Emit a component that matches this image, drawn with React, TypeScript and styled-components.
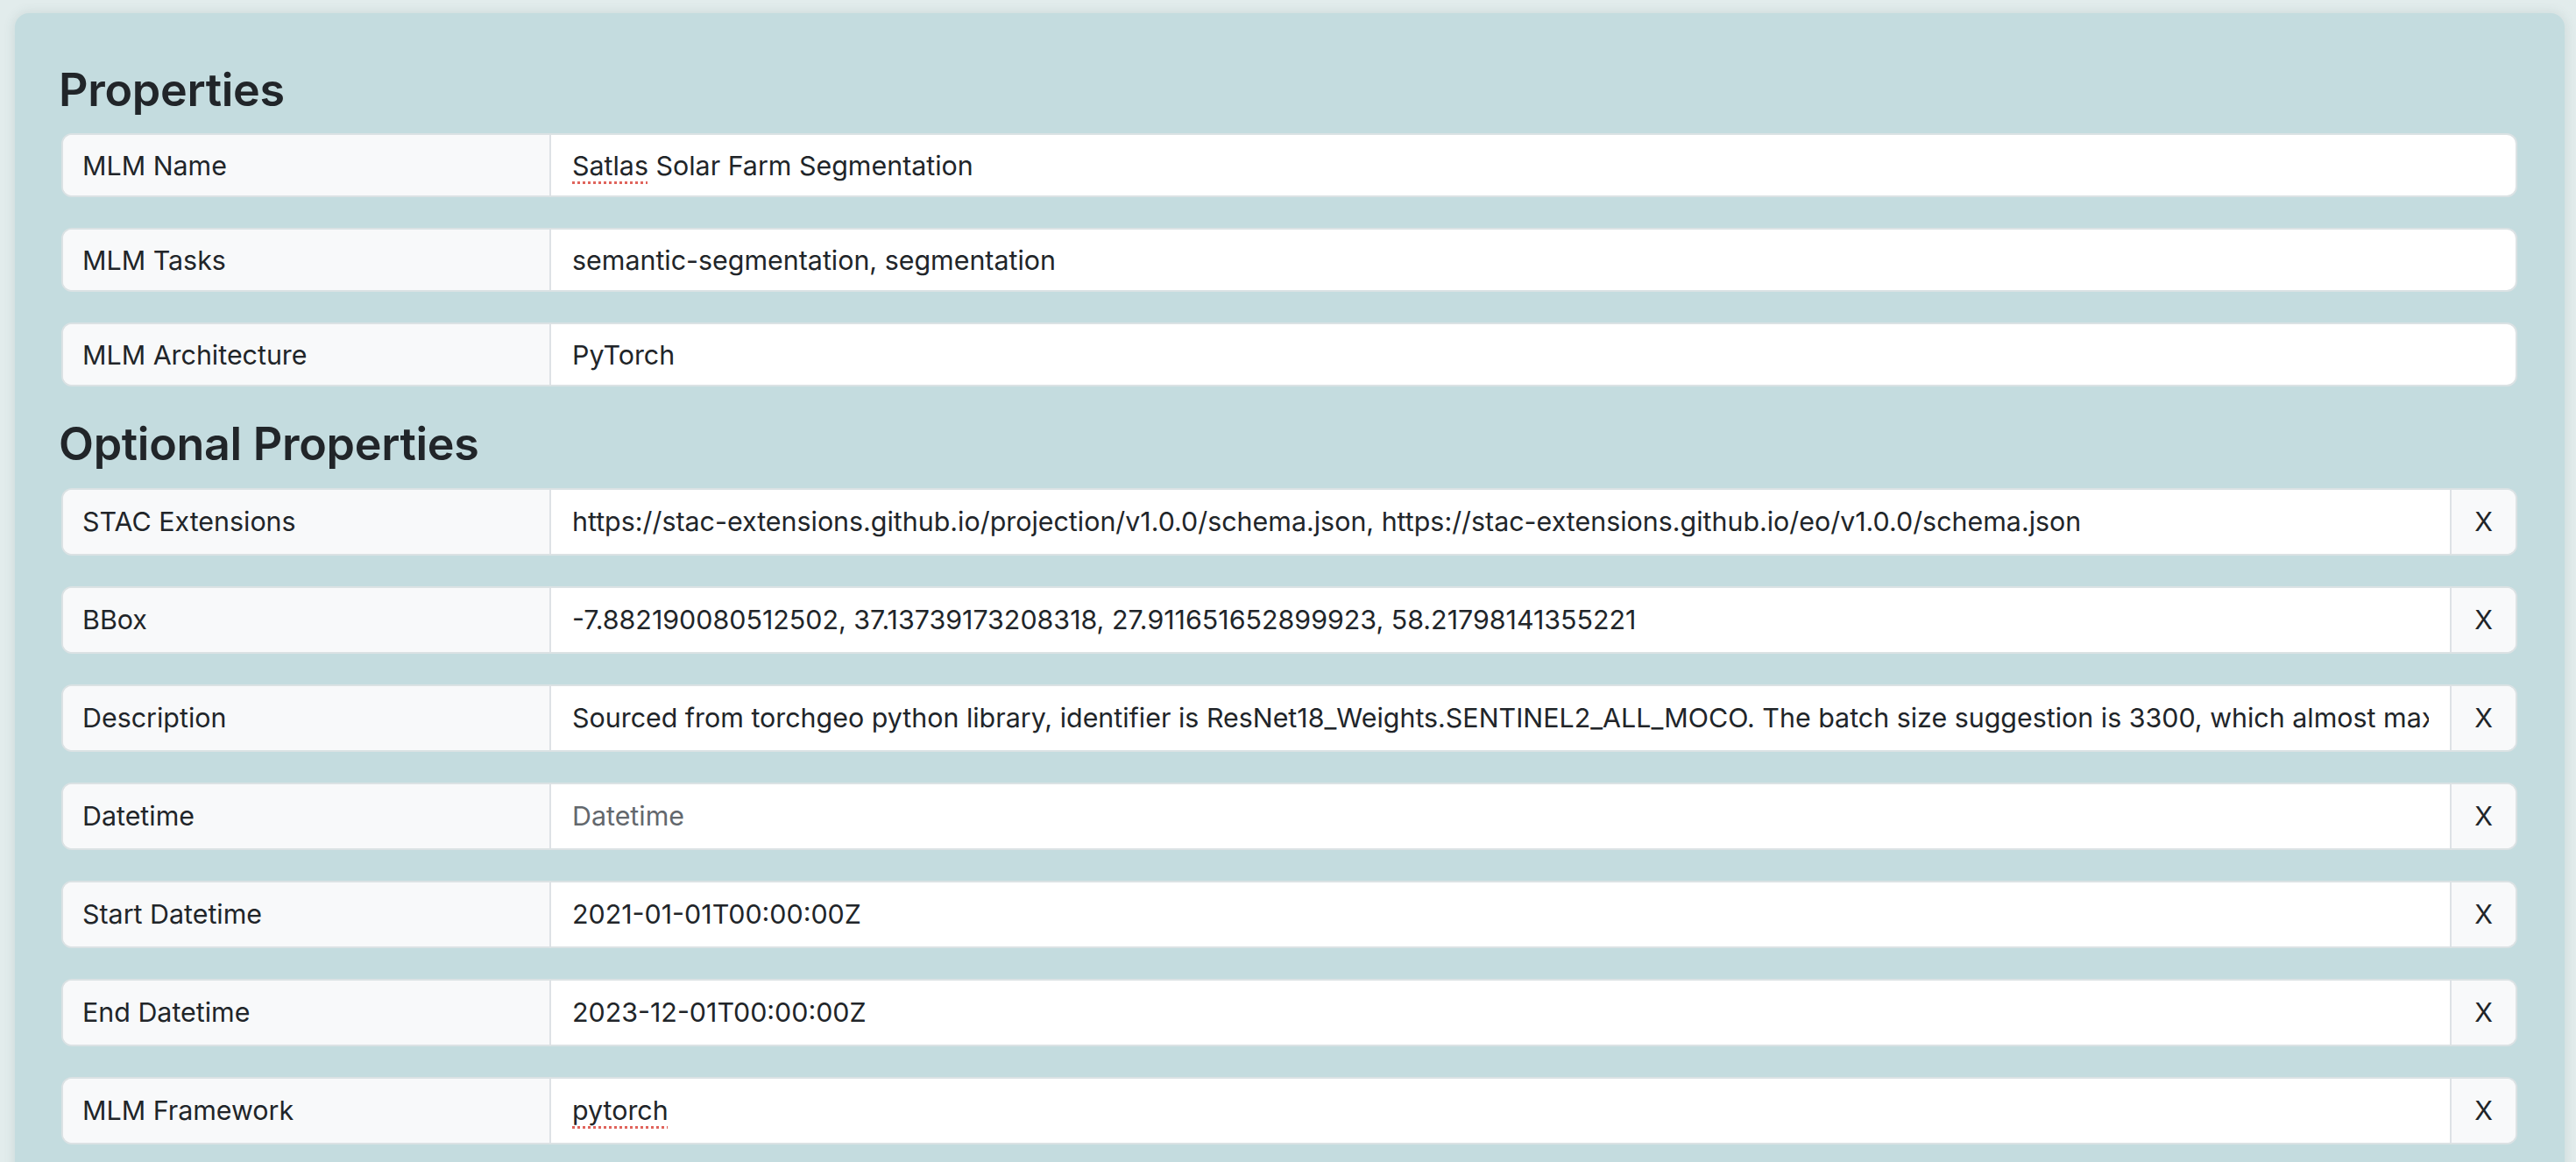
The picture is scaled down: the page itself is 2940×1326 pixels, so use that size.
import styled, { createGlobalStyle } from "styled-components";
import type { FC, ReactNode } from "react";

const GlobalStyle = createGlobalStyle`
  html, body {
    margin: 0;
    padding: 0;
    background: #e2ecec;
    font-family: Inter, "Noto Sans", "Liberation Sans", sans-serif;
    color: #212529;
  }
`;

type Field = {
  label: string;
  value?: ReactNode;
  placeholder?: string;
};

const Typo = ({ children }: { children: ReactNode }) => (
  <S.Misspelled>{children}</S.Misspelled>
);

const required: Field[] = [
  {
    label: "MLM Name",
    value: (
      <>
        <Typo>Satlas</Typo> Solar Farm Segmentation
      </>
    ),
  },
  { label: "MLM Tasks", value: "semantic-segmentation, segmentation" },
  { label: "MLM Architecture", value: "PyTorch" },
];

const optional: Field[] = [
  {
    label: "STAC Extensions",
    value:
      "https://stac-extensions.github.io/projection/v1.0.0/schema.json, https://stac-extensions.github.io/eo/v1.0.0/schema.json",
  },
  {
    label: "BBox",
    value:
      "-7.882190080512502, 37.13739173208318, 27.911651652899923, 58.21798141355221",
  },
  {
    label: "Description",
    value:
      "Sourced from torchgeo python library, identifier is ResNet18_Weights.SENTINEL2_ALL_MOCO. The batch size suggestion is 3300, which almost maxes out the memory of a single GPU.",
  },
  { label: "Datetime", placeholder: "Datetime" },
  { label: "Start Datetime", value: "2021-01-01T00:00:00Z" },
  { label: "End Datetime", value: "2023-12-01T00:00:00Z" },
  { label: "MLM Framework", value: <Typo>pytorch</Typo> },
];

const PropertyRow: FC<Field & { removable?: boolean }> = ({
  label,
  value,
  placeholder,
  removable,
}) => (
  <S.Row $tall={removable}>
    <S.Label>{label}</S.Label>
    <S.Value>
      <S.ValueText $placeholder={!value}>{value ?? placeholder}</S.ValueText>
    </S.Value>
    {removable && <S.Remove type="button">X</S.Remove>}
  </S.Row>
);

export default function App() {
  return (
    <>
      <GlobalStyle />
      <S.Panel>
        <S.Title>Properties</S.Title>
        {required.map((f) => (
          <PropertyRow key={f.label} {...f} />
        ))}
        <S.Title>Optional Properties</S.Title>
        {optional.map((f) => (
          <PropertyRow key={f.label} {...f} removable />
        ))}
      </S.Panel>
    </>
  );
}

const S = {
  Panel: styled.section`
    margin: 15px 13px 0 17px;
    padding: 57px 54px 20px 53px;
    background: #c4dcdf;
    border-radius: 16px;
    box-shadow: 0 0 14px rgba(60, 90, 90, 0.14);
  `,

  Title: styled.h3`
    margin: 0 0 18px -3px;
    font-size: 52px;
    font-weight: 600;
    line-height: 1.2;
    letter-spacing: -0.3px;
    color: #212529;
  `,

  Row: styled.div<{ $tall?: boolean }>`
    display: flex;
    height: ${(p) => (p.$tall ? 77 : 73)}px;
    box-sizing: border-box;
    margin-bottom: 35px;
    border: 2px solid #dbe2e4;
    border-radius: 12px;
    overflow: hidden;
    background: #fff;
    font-size: 30.4px;
  `,

  Label: styled.div`
    flex: 0 0 557px;
    box-sizing: border-box;
    display: flex;
    align-items: center;
    padding: 0 22px;
    background: #f8f9fa;
    border-right: 2px solid #dee2e6;
    white-space: nowrap;
  `,

  Value: styled.div`
    flex: 1;
    min-width: 0;
    display: flex;
    align-items: center;
    padding: 0 24px;
  `,

  ValueText: styled.div<{ $placeholder?: boolean }>`
    flex: 1;
    min-width: 0;
    overflow: hidden;
    white-space: nowrap;
    padding-bottom: 4px;
    margin-bottom: -4px;
    color: ${(p) => (p.$placeholder ? "#63686d" : "#212529")};
  `,

  Misspelled: styled.span`
    text-decoration-line: underline;
    text-decoration-style: dotted;
    text-decoration-color: #e0645c;
    text-decoration-thickness: 3px;
    text-underline-offset: 7px;
  `,

  Remove: styled.button`
    flex: 0 0 75px;
    border: none;
    border-left: 2px solid #dee2e6;
    background: #f8f9fa;
    font-family: inherit;
    font-size: 30.4px;
    color: #212529;
    padding: 0;
    cursor: pointer;
  `,
};
